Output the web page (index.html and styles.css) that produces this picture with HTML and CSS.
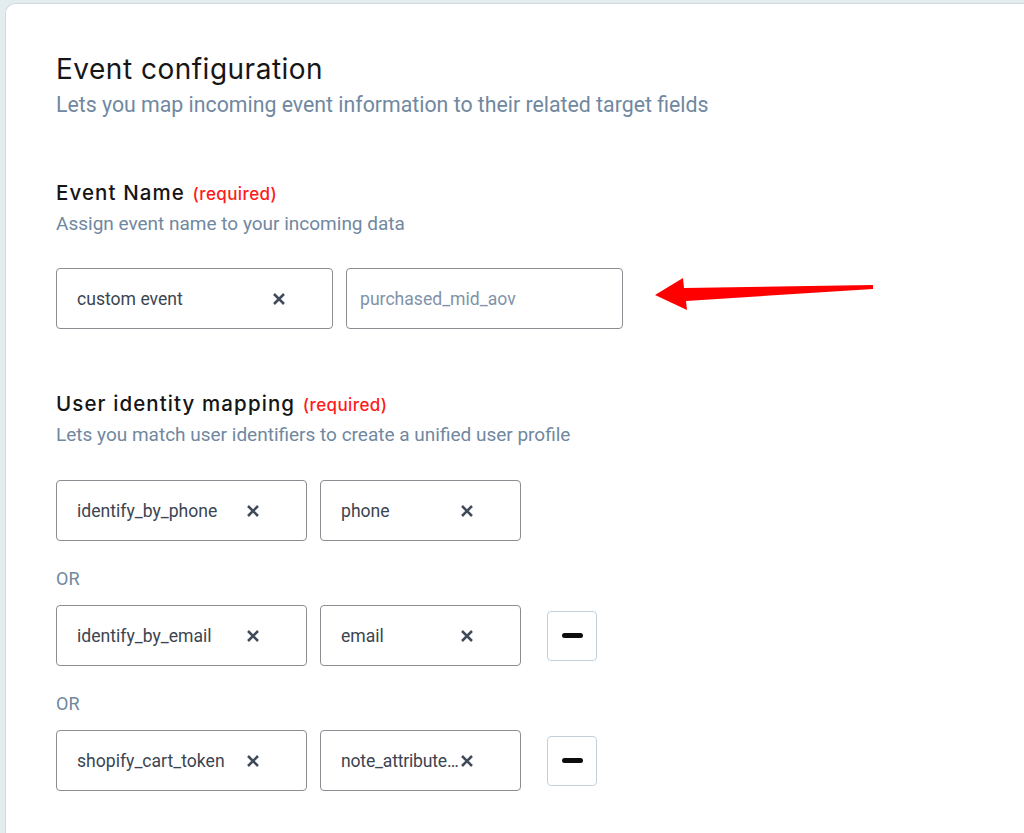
FILE: index.html
```html
<!DOCTYPE html>
<html lang="en">
<head>
<meta charset="utf-8">
<title>Event configuration</title>
<link rel="stylesheet" href="styles.css">
</head>
<body>
<div class="card">
  <h1 class="title">Event configuration</h1>
  <p class="subtitle">Lets you map incoming event information to their related target fields</p>

  <section class="section section-event">
    <h2 class="heading">Event Name <span class="req">(required)</span></h2>
    <p class="desc">Assign event name to your incoming data</p>
    <div class="row">
      <div class="field w277"><span class="val">custom event</span><svg class="x" viewBox="0 0 14 14"><path d="M2 2L12 12M12 2L2 12"/></svg></div>
      <div class="field w277 plain"><span class="ph">purchased_mid_aov</span></div>
    </div>
  </section>

  <section class="section section-user">
    <h2 class="heading">User identity mapping <span class="req">(required)</span></h2>
    <p class="desc">Lets you match user identifiers to create a unified user profile</p>
    <div class="row">
      <div class="field w251"><span class="val">identify_by_phone</span><svg class="x" viewBox="0 0 14 14"><path d="M2 2L12 12M12 2L2 12"/></svg></div>
      <div class="field w201"><span class="val">phone</span><svg class="x" viewBox="0 0 14 14"><path d="M2 2L12 12M12 2L2 12"/></svg></div>
    </div>
    <div class="or">OR</div>
    <div class="row">
      <div class="field w251"><span class="val">identify_by_email</span><svg class="x" viewBox="0 0 14 14"><path d="M2 2L12 12M12 2L2 12"/></svg></div>
      <div class="field w201"><span class="val">email</span><svg class="x" viewBox="0 0 14 14"><path d="M2 2L12 12M12 2L2 12"/></svg></div>
      <button class="minus" type="button"><span class="bar"></span></button>
    </div>
    <div class="or">OR</div>
    <div class="row">
      <div class="field w251"><span class="val">shopify_cart_token</span><svg class="x" viewBox="0 0 14 14"><path d="M2 2L12 12M12 2L2 12"/></svg></div>
      <div class="field w201"><span class="val tight">note_attributes.cart_token</span><svg class="x" viewBox="0 0 14 14"><path d="M2 2L12 12M12 2L2 12"/></svg></div>
      <button class="minus" type="button"><span class="bar"></span></button>
    </div>
  </section>
</div>
<svg class="arrow" width="1024" height="833" viewBox="0 0 1024 833">
  <polygon points="655,295 683,278 684,288 873,285 873,289 686,301 687,310" fill="#ff0000"/>
</svg>
</body>
</html>
```

FILE: styles.css
```css
* { box-sizing: border-box; }
html, body { margin: 0; padding: 0; }
body {
  background: #e3ecef;
  font-family: Roboto, "Liberation Sans", sans-serif;
  height: 833px;
  overflow: hidden;
  position: relative;
}
.card {
  margin: 3px 0 0 5px;
  background: #ffffff;
  border: 1px solid #cddbe0;
  border-right: none;
  border-radius: 10px 0 0 0;
  min-height: 840px;
  padding: 47px 0 0 50px;
}
.title {
  margin: 0;
  font-family: Inter, "Open Sans", sans-serif;
  font-weight: 400;
  font-size: 28px;
  line-height: 36px;
  color: #161616;
  letter-spacing: 0.5px;
}
.subtitle {
  margin: 5px 0 0;
  font-size: 21.3px;
  line-height: 26px;
  color: #7088a0;
}
.section-event { margin-top: 61px; }
.section-user { margin-top: 61px; }
.heading {
  margin: 0;
  font-family: Inter, "Open Sans", sans-serif;
  font-weight: 500;
  font-size: 20.5px;
  line-height: 28px;
  letter-spacing: 1.1px;
  color: #151515;
}
.req {
  font-size: 17px;
  letter-spacing: 0.4px;
  color: #ff1a1a;
  font-weight: 500;
  margin-left: 1px;
}
.desc {
  margin: 4px 0 32px;
  font-size: 19px;
  line-height: 24px;
  color: #7088a0;
}
.section-user .desc { margin-bottom: 33px; }
.row {
  display: flex;
  align-items: center;
  gap: 13px;
}
.field {
  height: 61px;
  border: 1px solid #8a8e92;
  border-radius: 4px;
  display: flex;
  align-items: center;
  padding: 0 46px 0 20px;
  font-size: 17.6px;
  color: #3b4551;
}
.field.plain { padding-left: 13px; }
.w277 { width: 277px; }
.w251 { width: 251px; }
.w201 { width: 201px; }
.val {
  flex: 1;
  min-width: 0;
  white-space: nowrap;
  overflow: hidden;
  text-overflow: ellipsis;
}
.val.tight { letter-spacing: -0.2px; margin-right: -2px; }
.ph { color: #7f93a8; }
.x {
  width: 14px;
  height: 14px;
  flex: none;
  fill: none;
  stroke: #3f4a5a;
  stroke-width: 2.5;
}
.or {
  margin: 26px 0 14px;
  font-size: 18px;
  line-height: 24px;
  color: #7088a0;
}
.minus {
  margin-left: 13px;
  width: 50px;
  height: 50px;
  border: 1px solid #c3d0da;
  border-radius: 4px;
  background: #fff;
  display: flex;
  align-items: center;
  justify-content: center;
  padding: 0;
}
.bar {
  width: 21px;
  height: 5px;
  border-radius: 3px;
  background: #0d0d0d;
}
.arrow {
  position: absolute;
  left: 0;
  top: 0;
  pointer-events: none;
}
```
